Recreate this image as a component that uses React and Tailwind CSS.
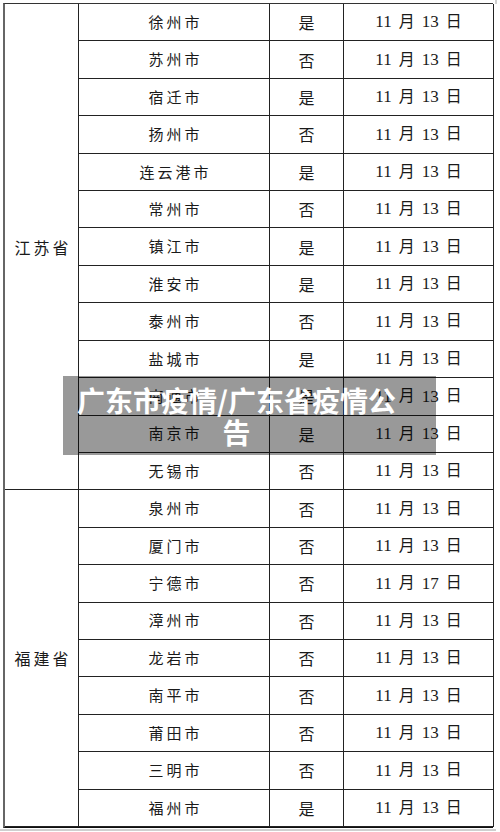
import React from 'react';

const cjk = { fontFamily: '"Noto Sans CJK SC", "Noto Sans", sans-serif' };
const dateFont = { fontFamily: '"Liberation Serif", "Noto Sans CJK SC", serif' };

const groups = [
    {
        province: '江苏省',
        rows: [
            ['徐州市', '是', '11 月 13 日'],
            ['苏州市', '否', '11 月 13 日'],
            ['宿迁市', '是', '11 月 13 日'],
            ['扬州市', '否', '11 月 13 日'],
            ['连云港市', '是', '11 月 13 日'],
            ['常州市', '否', '11 月 13 日'],
            ['镇江市', '是', '11 月 13 日'],
            ['淮安市', '是', '11 月 13 日'],
            ['泰州市', '否', '11 月 13 日'],
            ['盐城市', '是', '11 月 13 日'],
            ['南通市', '是', '11 月 13 日'],
            ['南京市', '是', '11 月 13 日'],
            ['无锡市', '否', '11 月 13 日'],
        ],
    },
    {
        province: '福建省',
        rows: [
            ['泉州市', '否', '11 月 13 日'],
            ['厦门市', '否', '11 月 13 日'],
            ['宁德市', '否', '11 月 17 日'],
            ['漳州市', '否', '11 月 13 日'],
            ['龙岩市', '否', '11 月 13 日'],
            ['南平市', '否', '11 月 13 日'],
            ['莆田市', '否', '11 月 13 日'],
            ['三明市', '否', '11 月 13 日'],
            ['福州市', '是', '11 月 13 日'],
        ],
    },
];

const cell = "flex items-center justify-center border-r border-b border-[#222] text-[#1a1a1a]";

export default function App() {
    return (
        <div className="relative w-[500px] h-[832px] bg-white overflow-hidden">
            {/* frame shadow lines */}
            <div className="absolute left-0 top-[829px] w-[496px] h-[2px] bg-[#cfcfcf]" />
            <div className="absolute left-[495px] top-0 w-[2px] h-[4px] bg-[#cfcfcf]" />

            <div className="pt-[3px] pl-[3px]">
                <div className="grid grid-cols-[74px_191px_74px_150px] grid-rows-[repeat(22,minmax(0,1fr))] w-[490px] h-[825px] border-t border-l-2 border-t-[#333] border-l-[#666] border-b border-b-[#111]">
                    {groups.map((g) => (
                        <React.Fragment key={g.province}>
                            <div
                                className={`${cell} col-start-1 text-[16px] tracking-[3px] pl-[3px]`}
                                style={{ ...cjk, gridRow: `span ${g.rows.length} / span ${g.rows.length}` }}
                            >
                                {g.province}
                            </div>
                            {g.rows.map(([city, yn, date]) => (
                                <React.Fragment key={city}>
                                    <div className={`${cell} col-start-2 text-[15px] tracking-[3px] pl-[3px]`} style={cjk}>{city}</div>
                                    <div className={`${cell} col-start-3 text-[16px]`} style={cjk}>{yn}</div>
                                    <div className={`${cell} col-start-4 gap-[7px] text-[17px]`} style={dateFont}>
                                        {date.split(' ').map((part, j) => (
                                            <span key={j} className={j % 2 ? 'text-[16px]' : ''}>{part}</span>
                                        ))}
                                    </div>
                                </React.Fragment>
                            ))}
                        </React.Fragment>
                    ))}
                </div>
            </div>

            {/* caption overlay */}
            <div className="absolute left-[63px] top-[376px] w-[373px] h-[79px] bg-black/40 flex items-center justify-center pl-[14px] pr-[40px]">
                <p className="text-white font-bold text-[28px] leading-[32px] text-center whitespace-nowrap" style={cjk}>
                    广东市疫情/广东省疫情公<br />告
                </p>
            </div>
        </div>
    );
}
